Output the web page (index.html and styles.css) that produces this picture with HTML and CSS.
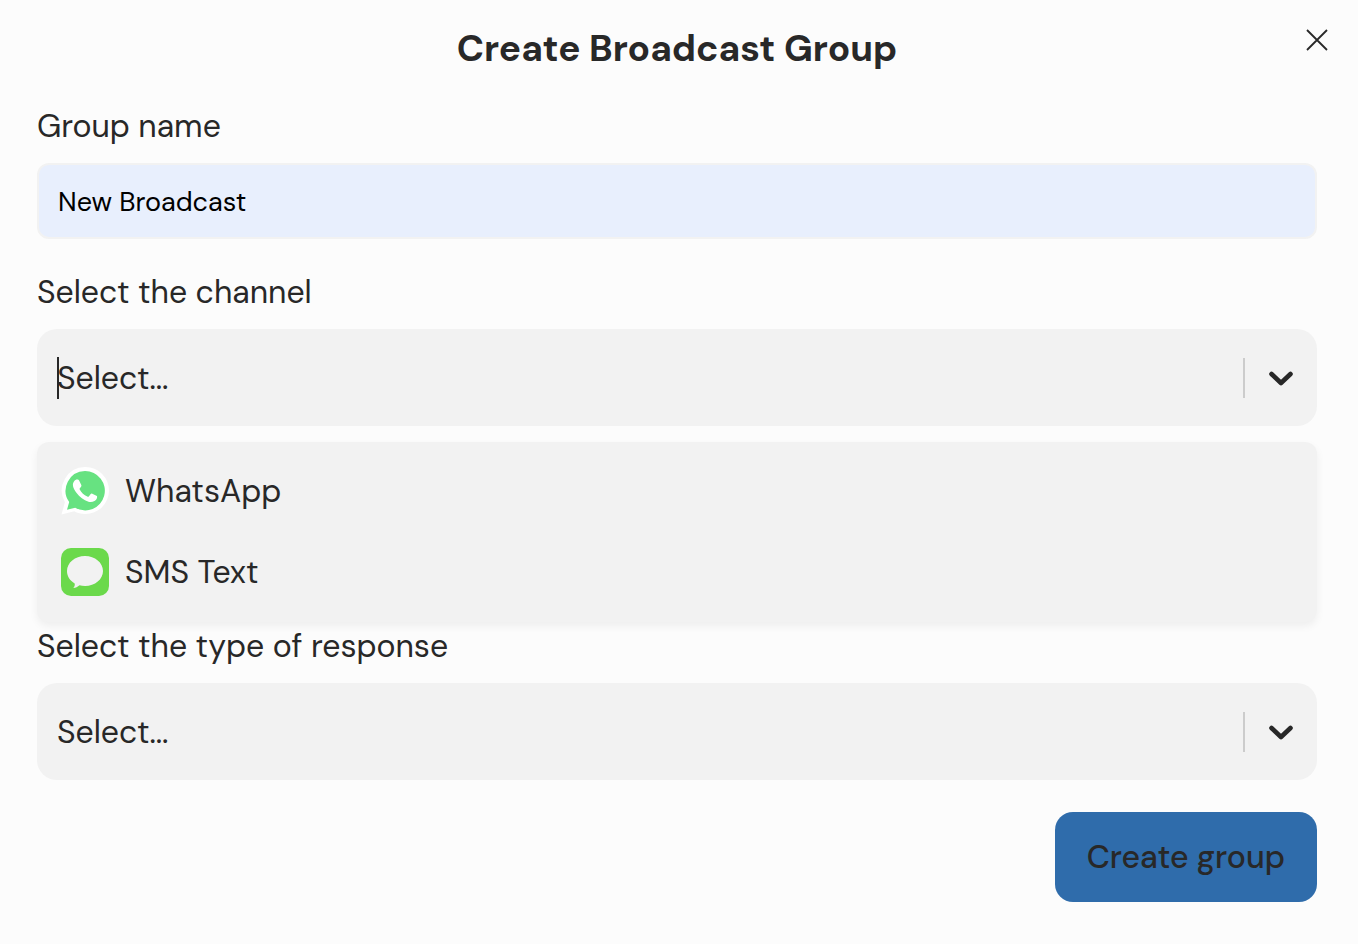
FILE: index.html
```html
<!DOCTYPE html>
<html lang="en">
<head>
  <meta charset="UTF-8" />
  <meta name="viewport" content="width=device-width, initial-scale=1.0" />
  <title>Create Broadcast Group</title>
  <link rel="stylesheet" href="styles.css">
</head>
<body>
  <main class="modal">
    <header class="modal-header">
      <h1>Create Broadcast Group</h1>
      <button type="button" class="btn-close" aria-label="Close">
        <svg width="22" height="22" viewBox="0 0 22 22" fill="none" stroke="currentColor" stroke-width="1.800">
          <path d="M1 1l20 20M21 1L1 21" />
        </svg>
      </button>
    </header>

    <form class="form">
      <label for="group-name">Group name</label>
      <input type="text" id="group-name" class="text-input" value="New Broadcast">

      <label for="channel">Select the channel</label>
      <div class="select-box focused">
        <select id="channel">
          <option>Select...</option>
          <option>WhatsApp</option>
          <option>SMS Text</option>
        </select>
        <span class="separator"></span>
        <svg class="chevron" width="24" height="16" viewBox="0 0 24 16" fill="none" stroke="currentColor" stroke-width="4.600" stroke-linecap="round" stroke-linejoin="round">
          <path d="M2.500 4l9.500 9 9.500-9" />
        </svg>
      </div>

      <ul class="menu" role="listbox" aria-label="Channels">
        <li role="option">
          <svg width="48" height="48" viewBox="0 0 48 48">
            <path fill="#fff" d="M24.500 0A23.500 23.500 0 0 1 48 23.500A23.500 23.500 0 0 1 24 47C20 47 16.500 46 13.200 44.300L0.500 47.600L3.900 35.200A23.500 23.500 0 0 1 24.500 0Z" />
            <path fill="#67e281" d="M24 4A19.700 19.700 0 1 1 14.200 40.700L6 42.700L8.200 35A19.700 19.700 0 0 1 24 4Z" />
            <path fill="#fff" d="M18.100 13.600C17.600 12.500 17.100 12.500 16.500 12.500C14.900 12.400 14.200 13 13.500 13.800C12.500 14.900 11.900 16.300 11.900 18C11.900 20.800 13.800 23.600 15.400 25.700C18.600 29.900 22.700 33.200 27.500 34.700C30.900 35.700 34.900 34.100 35.700 31.800C36.100 30.700 36.300 29.500 35.900 29L31.300 26.700C30.600 26.400 30.100 26.500 29.700 27.100L27.800 29.400C27.400 29.900 26.900 29.900 26.300 29.600C22.900 28.100 20.500 25.700 18.700 22.500C18.400 22 18.500 21.600 18.900 21.200L20.200 19.500C20.500 19.100 20.500 18.600 20.300 18.100Z" />
          </svg>
          <span>WhatsApp</span>
        </li>
        <li role="option">
          <svg width="48" height="48" viewBox="0 0 48 48">
            <rect width="48" height="48" rx="10" fill="#6bd94b" />
            <path fill="#f2f2f2" d="M24 8C34 8 42 14.700 42 23S34 38 24 38C22 38 20.200 37.800 18.500 37.300C16.700 38.900 14.700 39.900 12.300 40.100C13.500 38.700 14 37 13.700 35.400C9 32.700 6 28.200 6 23C6 14.700 14 8 24 8Z" />
          </svg>
          <span>SMS Text</span>
        </li>
      </ul>

      <label for="response">Select the type of response</label>
      <div class="select-box">
        <select id="response">
          <option>Select...</option>
        </select>
        <span class="separator"></span>
        <svg class="chevron" width="24" height="16" viewBox="0 0 24 16" fill="none" stroke="currentColor" stroke-width="4.600" stroke-linecap="round" stroke-linejoin="round">
          <path d="M2.500 4l9.500 9 9.500-9" />
        </svg>
      </div>

      <button type="submit" class="btn-create">Create group</button>
    </form>
  </main>
</body>
</html>
```
FILE: styles.css
```css
* {
  box-sizing: border-box;
}

body {
  margin: 0;
  font-family: "DM Sans", Inter, sans-serif;
  font-size: 32px;
  line-height: 42px;
  background-color: #fcfcfc;
  color: #282828;
}

.modal {
  padding: 24px 41px 40px 37px;
}

.modal-header {
  position: relative;
}

.modal-header h1 {
  margin: 0;
  font-size: 37px;
  line-height: 49px;
  font-weight: 700;
  text-align: center;
}

.btn-close {
  position: absolute;
  top: 5px;
  right: -11px;
  display: flex;
  padding: 0;
  border: none;
  background: none;
  color: inherit;
  cursor: pointer;
}

.form {
  display: flex;
  flex-direction: column;
  margin-top: 32px;
}

.form label {
  margin-bottom: 16px;
}

.text-input {
  height: 76px;
  margin-bottom: 32px;
  padding: 0 19px;
  border: 2px solid #f2f2f2;
  border-radius: 12px;
  background-color: #e8effd;
  color: #000;
  font-family: inherit;
  font-size: 27px;
}

.select-box {
  position: relative;
  display: flex;
  align-items: center;
  height: 97px;
  padding: 0 24px 0 20px;
  border-radius: 20px;
  background-color: #f2f2f2;
}

.select-box select {
  flex: 1;
  height: 100%;
  padding: 0;
  border: none;
  outline: none;
  appearance: none;
  background: none;
  color: inherit;
  font: inherit;
}

/* text cursor of the open select */
.focused::before {
  content: "";
  position: absolute;
  left: 20px;
  width: 2px;
  height: 42px;
  background-color: #282828;
}

.separator {
  width: 2px;
  height: 40px;
  margin-right: 24px;
  background-color: #cccccc;
}

.menu {
  margin: 16px 0 3px;
  padding: 8px 0 10px;
  list-style: none;
  border-radius: 12px;
  background-color: #f2f2f2;
  box-shadow: 0 4px 8px rgba(0, 0, 0, 0.06);
}

.menu li {
  display: flex;
  align-items: center;
  gap: 16px;
  min-height: 81px;
  padding: 0 24px;
}

.btn-create {
  align-self: flex-end;
  margin-top: 32px;
  padding: 24px 32px;
  border: none;
  border-radius: 18px;
  background-color: #2f6cab;
  color: inherit;
  font: inherit;
  font-weight: 500;
  cursor: pointer;
}
```
